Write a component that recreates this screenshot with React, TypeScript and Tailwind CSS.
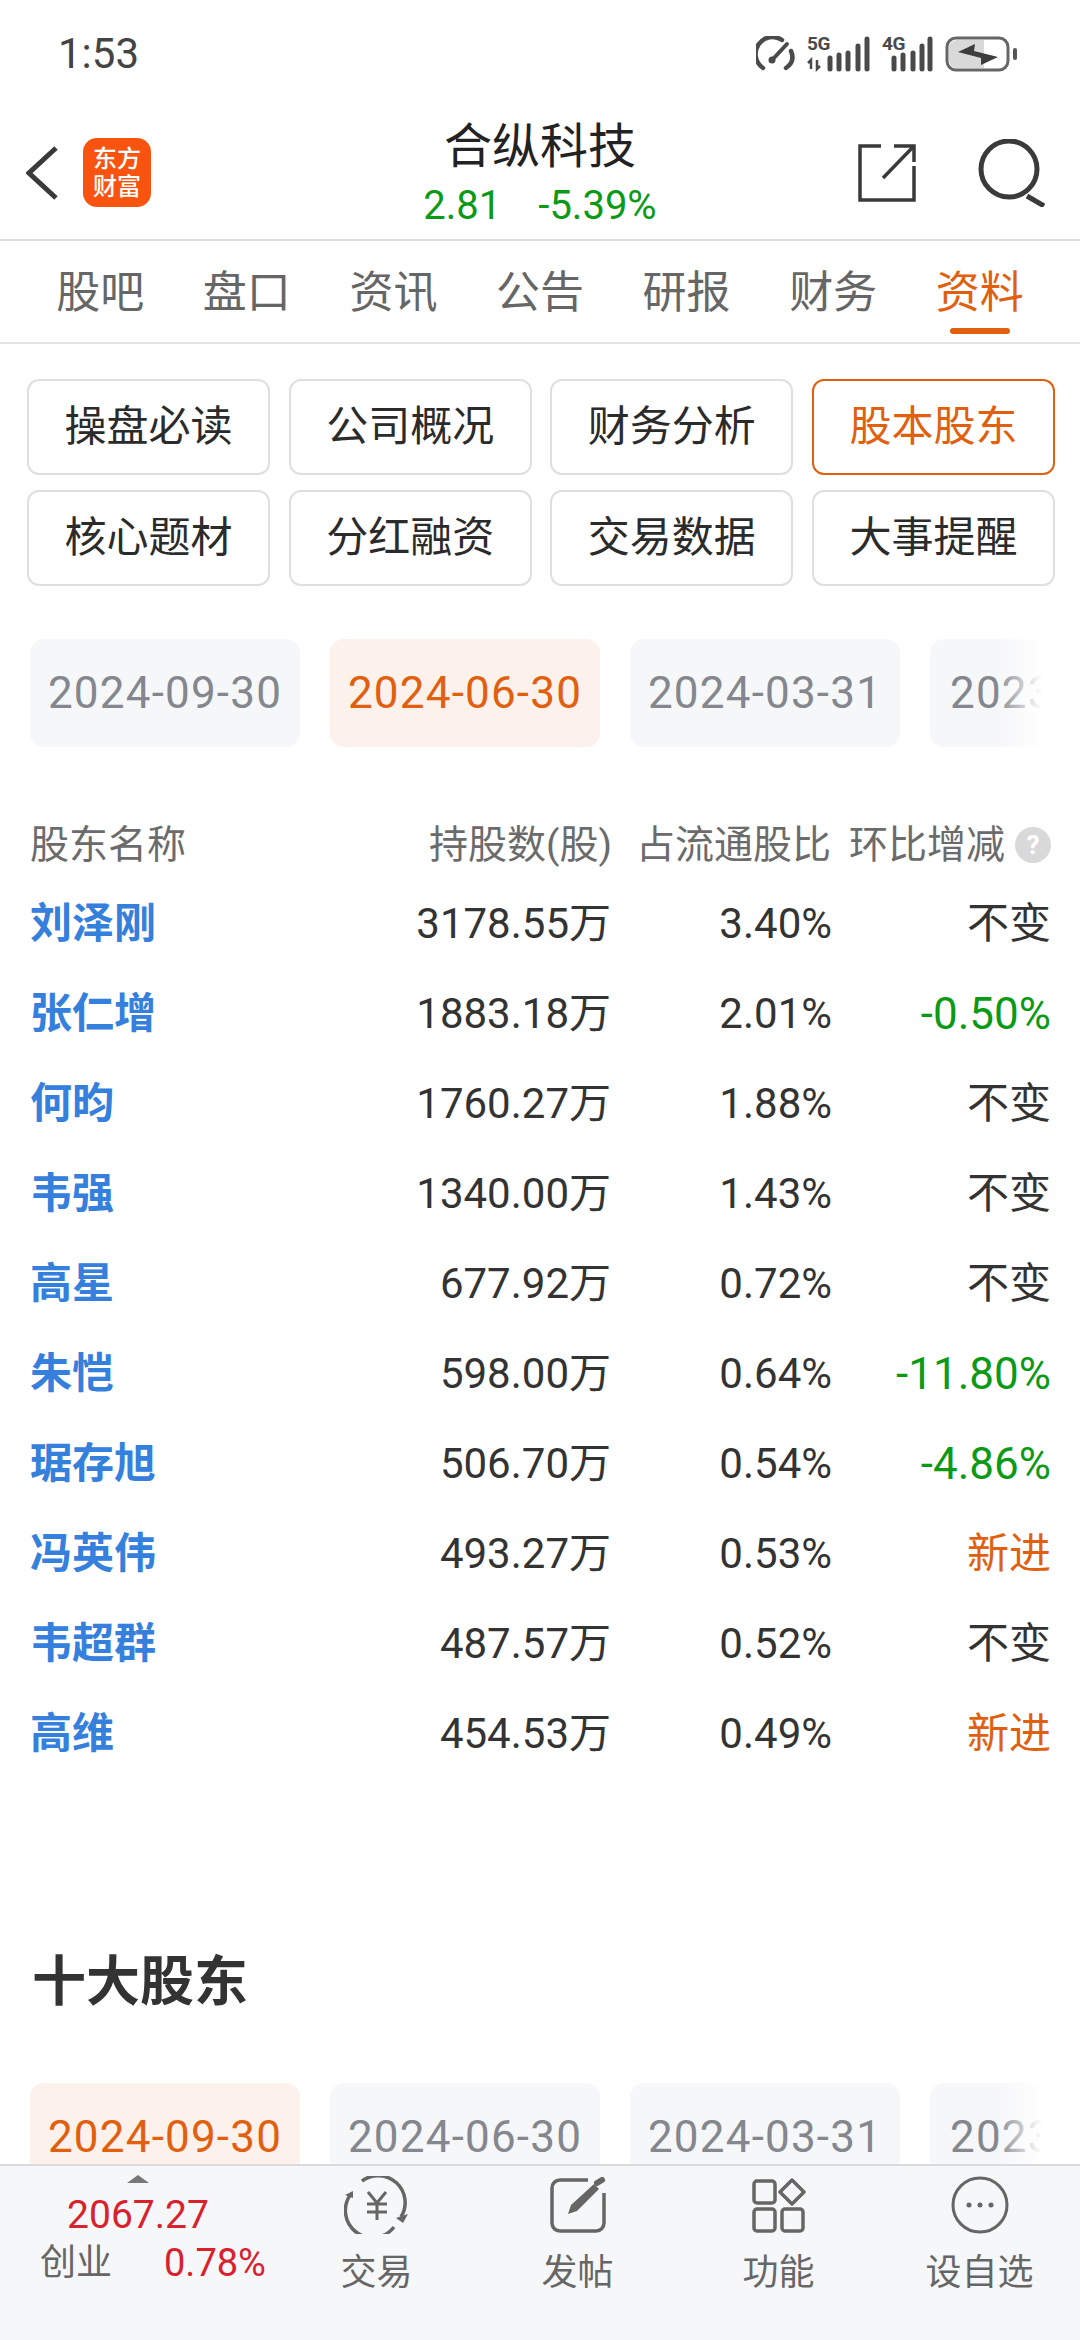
const font = { fontFamily: '"Roboto", "Noto Sans CJK SC", sans-serif' };

const tabs = ["股吧", "盘口", "资讯", "公告", "研报", "财务", "资料"];
const menus = ["操盘必读", "公司概况", "财务分析", "股本股东", "核心题材", "分红融资", "交易数据", "大事提醒"];
const rows = [
  { name: "刘泽刚", shares: "3178.55万", pct: "3.40%", change: "不变" },
  { name: "张仁增", shares: "1883.18万", pct: "2.01%", change: "-0.50%" },
  { name: "何昀", shares: "1760.27万", pct: "1.88%", change: "不变" },
  { name: "韦强", shares: "1340.00万", pct: "1.43%", change: "不变" },
  { name: "高星", shares: "677.92万", pct: "0.72%", change: "不变" },
  { name: "朱恺", shares: "598.00万", pct: "0.64%", change: "-11.80%" },
  { name: "琚存旭", shares: "506.70万", pct: "0.54%", change: "-4.86%" },
  { name: "冯英伟", shares: "493.27万", pct: "0.53%", change: "新进" },
  { name: "韦超群", shares: "487.57万", pct: "0.52%", change: "不变" },
  { name: "高维", shares: "454.53万", pct: "0.49%", change: "新进" },
];

function changeColor(v: string) {
  if (v.startsWith("-")) return "text-[44px] text-[#0b9a16]";
  if (v === "新进") return "text-[#e0600f]";
  return "text-[#333333]";
}

function Signal({ label, wide }: { label: string; wide?: boolean }) {
  const xs = wide ? [23, 32, 41, 51, 60] : [12, 21, 31, 40, 48];
  const tops = [22, 19, 17, 10, 3];
  return (
    <div className={`relative h-[36px] ${wide ? "w-[63px]" : "w-[51px]"}`}>
      <span className="absolute left-0 top-[-3px] text-[19px] font-bold leading-[22px] tracking-[-0.5px] text-[#4a4a4a]">{label}</span>
      <svg width={wide ? 63 : 51} height="36" viewBox={wide ? "0 0 63 36" : "0 0 51 36"} className="absolute left-0 top-0">
        {xs.map((x, i) => (
          <line key={x} x1={x} y1={tops[i]} x2={x} y2="33" stroke="#4a4a4a" strokeWidth="5" strokeLinecap="round" />
        ))}
        {wide && <path d="M4 33V24L1 27M10 24V33L13 30" fill="none" stroke="#4a4a4a" strokeWidth="2.5" />}
      </svg>
    </div>
  );
}

function StatusBar() {
  return (
    <div className="flex h-[100px] items-center justify-between pl-[58px] pr-[62px] pt-[8px]">
      <span className="text-[42px] leading-none text-[#444444]">1:53</span>
      <div className="flex items-center gap-[12px]">
        <svg width="39" height="36" viewBox="0 0 39 36" fill="none" stroke="#4a4a4a" strokeWidth="4.5" strokeLinecap="round">
          <path d="M7 32A16 16 0 0 1 26 4" />
          <path d="M35 15C38 22 36 28 30 32" />
          <path d="M17 23 31 8" strokeWidth="4" />
          <circle cx="16" cy="24" r="3.5" fill="#4a4a4a" stroke="none" />
        </svg>
        <Signal label="5G" wide />
        <Signal label="4G" />
        <svg width="73" height="36" viewBox="0 0 73 36">
          <rect x="2" y="2" width="61" height="32" rx="9" fill="#fff" stroke="#666" strokeWidth="3" />
          <path d="M4 12a8 8 0 0 1 8-8h27v28H12a8 8 0 0 1-8-8z" fill="#d9d9d9" />
          <path d="M13 16 30 8 29 15 53 21 36 29 36 22z" fill="#3d3d3d" />
          <rect x="68" y="12" width="4" height="12" rx="2" fill="#555" />
        </svg>
      </div>
    </div>
  );
}

function Header() {
  return (
    <div className="relative flex h-[141px] items-center justify-between border-b-2 border-[#dedede] pl-[26px] pr-[34px] pt-[6px]">
      <div className="flex items-center gap-[25px]">
        <svg width="32" height="54" viewBox="0 0 32 54" fill="none" stroke="#3a3a3a" strokeWidth="5">
          <path d="M30 2 3 27 30 52" />
        </svg>
        <div className="flex h-[69px] w-[68px] flex-col items-center justify-center rounded-[14px] bg-[#f9540f] text-[24px] font-medium leading-[28px] text-white">
          <span>东方</span>
          <span>财富</span>
        </div>
      </div>
      <div className="absolute left-0 right-0 top-[19px] flex flex-col items-center">
        <span className="text-[48px] leading-[56px] text-[#222222]">合纵科技</span>
        <span className="mt-[9px] flex gap-[37px] text-[40px] leading-[44px] text-[#0b9a16]">
          <span>2.81</span>
          <span>-5.39%</span>
        </span>
      </div>
      <div className="flex items-center gap-[62px]">
        <svg width="58" height="58" viewBox="0 0 58 58" fill="none" stroke="#3a3a3a" strokeWidth="3.5">
          <path d="M23 2H2V56H56V22" />
          <path d="M25 34 56 2" />
          <path d="M36 2H56V18" />
        </svg>
        <svg width="68" height="68" viewBox="0 0 68 68" fill="none" stroke="#3a3a3a" strokeWidth="5">
          <circle cx="31" cy="30" r="28" />
          <path d="M49 57 66 67" />
        </svg>
      </div>
    </div>
  );
}

function Tabs() {
  return (
    <div className="grid h-[103px] grid-cols-7 border-b-2 border-[#e2e2e2] px-[27px]">
      {tabs.map((t, i) => (
        <div key={t} className="relative flex items-center justify-center pt-[2px]">
          <span className={`text-[44px] leading-none ${i === 6 ? "text-[#e0600f]" : "text-[#666666]"}`}>{t}</span>
          {i === 6 && <span className="absolute bottom-[8px] left-[44px] h-[6px] w-[60px] rounded-full bg-[#e0600f]" />}
        </div>
      ))}
    </div>
  );
}

function DateChips({ active }: { active: number }) {
  const dates = ["2024-09-30", "2024-06-30", "2024-03-31", "2023-12-31"];
  return (
    <div className="relative flex h-[108px] gap-[30px] overflow-hidden pl-[30px]">
      {dates.map((d, i) => (
        <div
          key={d}
          className={`flex h-[108px] w-[270px] shrink-0 items-center justify-center rounded-[14px] text-[44px] tracking-[1.2px] ${
            i === active ? "bg-[#fdf1ec] text-[#e0600f]" : "bg-[#f6f7f9] text-[#85878f]"
          }`}
        >
          <span className={i === 3 ? "w-full pl-[20px]" : ""}>{d}</span>
        </div>
      ))}
      <div className="absolute bottom-0 right-0 top-0 w-[84px] bg-gradient-to-r from-transparent via-white via-[55%] to-white" />
    </div>
  );
}

function Table() {
  return (
    <div className="mt-[64px] px-[30px]">
      <div className="grid h-[68px] grid-cols-[320px_262px_219px_220px] items-center text-[39px] leading-none text-[#6b6b6b]">
        <span>股东名称</span>
        <span className="text-right">持股数(股)</span>
        <span className="text-right">占流通股比</span>
        <span className="flex items-center justify-end gap-[10px]">
          环比增减
          <span className="flex h-[36px] w-[36px] items-center justify-center rounded-full bg-[#d9d9d9] text-[26px] font-bold text-white">?</span>
        </span>
      </div>
      {rows.map((r) => (
        <div key={r.name} className="grid h-[90px] grid-cols-[320px_261px_221px_219px] items-center text-[42px] leading-none text-[#333333]">
          <span className="font-bold text-[#3580dc]">{r.name}</span>
          <span className="text-right">{r.shares}</span>
          <span className="text-right">{r.pct}</span>
          <span className={`text-right ${changeColor(r.change)}`}>{r.change}</span>
        </div>
      ))}
    </div>
  );
}

function NavItem({ label, children }: { label: string; children: React.ReactNode }) {
  return (
    <div className="flex w-[201px] flex-col items-center pt-[9px]">
      <div className="flex h-[60px] items-center justify-center">{children}</div>
      <span className="mt-[17px] text-[36px] leading-[42px] text-[#666666]">{label}</span>
    </div>
  );
}

function BottomBar() {
  return (
    <div className="flex h-[176px] border-t-2 border-[#d9dade] bg-[#f6f7f9]">
      <div className="relative w-[276px] shrink-0">
        <div className="absolute left-[127px] top-[9px] h-0 w-0 border-x-[11px] border-b-[8px] border-x-transparent border-b-[#777777]" />
        <div className="absolute left-0 top-[26px] w-[276px] text-center text-[39px] leading-[46px] text-[#d9202d]">2067.27</div>
        <div className="absolute left-[40px] top-[74px] text-[36px] leading-[46px] text-[#666666]">创业</div>
        <div className="absolute left-[164px] top-[74px] text-[38px] leading-[46px] text-[#d9202d]">0.78%</div>
      </div>
      <div className="flex">
        <NavItem label="交易">
          <svg width="66" height="58" viewBox="0 0 66 58" fill="none" stroke="#666" strokeWidth="3.5">
            <path d="M18 5A27 27 0 0 1 57 41" />
            <path d="M50 51A27 27 0 0 1 7 18" />
            <path d="M1 19 9 15 9 22z" fill="#666" stroke="none" />
            <path d="M52 42 64 38 59 47z" fill="#666" stroke="none" />
            <path d="M24 16 33 27 42 16M33 27V44M23 28H43M23 36H43" strokeWidth="3" />
          </svg>
        </NavItem>
        <NavItem label="发帖">
          <svg width="56" height="56" viewBox="0 0 56 56" fill="none" stroke="#666" strokeWidth="3.5">
            <path d="M38 3H10A8 8 0 0 0 2 11V46A8 8 0 0 0 10 54H46A8 8 0 0 0 54 46V16" />
            <path d="M18 37 21 28 44 7 49 12 27 34z" fill="#666" stroke="none" />
            <path d="M47 6 52 3" strokeWidth="6" strokeLinecap="round" />
          </svg>
        </NavItem>
        <NavItem label="功能">
          <svg width="54" height="56" viewBox="0 0 54 56" fill="none" stroke="#666" strokeWidth="3.5">
            <rect x="2" y="4" width="21" height="22" rx="3" />
            <rect x="2" y="32" width="21" height="22" rx="3" />
            <rect x="30" y="32" width="21" height="22" rx="3" />
            <path d="M40 3 52 15 40 27 28 15z" strokeLinejoin="round" />
          </svg>
        </NavItem>
        <NavItem label="设自选">
          <svg width="58" height="58" viewBox="0 0 58 58" fill="none" stroke="#666" strokeWidth="3">
            <circle cx="29" cy="29" r="27" />
            <circle cx="18" cy="29" r="2.5" fill="#666" stroke="none" />
            <circle cx="29" cy="29" r="2.5" fill="#666" stroke="none" />
            <circle cx="40" cy="29" r="2.5" fill="#666" stroke="none" />
          </svg>
        </NavItem>
      </div>
    </div>
  );
}

export default function App() {
  return (
    <div className="flex h-[2340px] w-[1080px] flex-col overflow-hidden bg-white" style={font}>
      <StatusBar />
      <Header />
      <Tabs />
      <div className="min-h-0 flex-1 overflow-hidden">
        <div className="grid grid-cols-[243px_243px_243px_243px] gap-x-[18.7px] gap-y-[15px] px-[27px] pt-[35px]">
          {menus.map((m) => (
            <div
              key={m}
              className={`flex h-[96px] items-center justify-center rounded-[12px] border-2 text-[42px] leading-none ${
                m === "股本股东" ? "border-[#e0600f] text-[#e0600f]" : "border-[#dfdfdf] text-[#2b2b2b]"
              }`}
            >
              {m}
            </div>
          ))}
        </div>
        <div className="mt-[53px]">
          <DateChips active={1} />
        </div>
        <Table />
        <div className="mt-[177px] px-[32px] text-[54px] font-bold leading-none text-[#333333]">十大股东</div>
        <div className="mt-[73px]">
          <DateChips active={0} />
        </div>
      </div>
      <BottomBar />
    </div>
  );
}
